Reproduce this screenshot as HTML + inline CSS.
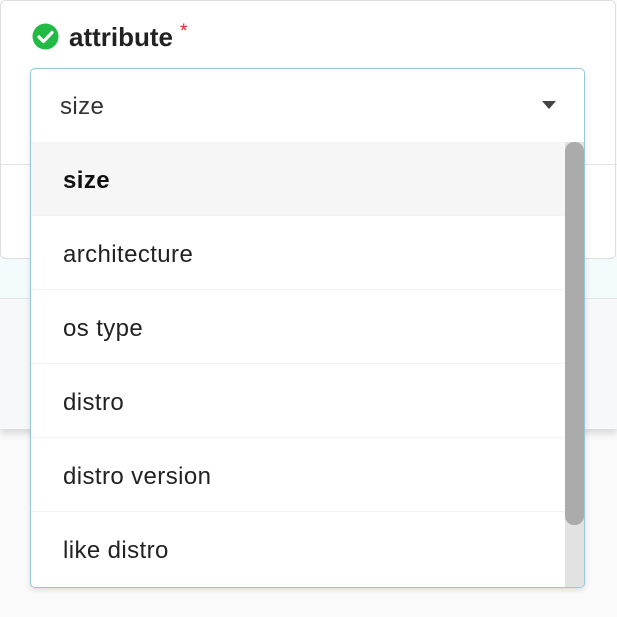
<!DOCTYPE html>
<html><head><style>
body{margin:0;width:617px;height:617px;overflow:hidden;background:#fafafa;font-family:"Liberation Sans",sans-serif;position:relative;color:#222}
.abs{position:absolute}
.it{height:73px;border-top:1px solid #f3f3f3;font-size:24px;letter-spacing:0.4px;line-height:78px;padding-left:32px}
</style></head><body>
<div class="abs" style="left:0;top:298px;width:617px;height:130px;background:#f6f8f9;border-top:1px solid #e2e5e7;box-shadow:0 4px 8px rgba(0,0,0,.15)"></div>
<div class="abs" style="left:0;top:258px;width:617px;height:40px;background:#f4fbfc"></div>
<div class="abs" style="left:0;top:0;width:614px;height:257px;background:#fff;border:1.5px solid #ddd;border-radius:6px"></div>
<div class="abs" style="left:0;top:164px;width:617px;height:1px;background:#e3e3e3"></div>
<svg class="abs" style="left:32px;top:23px" width="28" height="28" viewBox="0 0 28 28"><circle cx="13.5" cy="13.5" r="13" fill="#21ba45"/><path d="M7 14l4.5 4.5 8.5-9" stroke="#fff" stroke-width="3.2" fill="none" stroke-linecap="round" stroke-linejoin="round"/></svg>
<div class="abs" style="left:69px;top:22px;font-size:26px;font-weight:bold;color:#222">attribute</div>
<div class="abs" style="left:180px;top:21px;font-size:19px;color:#db2828">*</div>
<div class="abs" style="left:30px;top:68px;width:553px;height:518px;background:#fff;border:1.5px solid #96c8da;border-radius:5px;box-shadow:0 2px 6px rgba(0,0,0,.12);overflow:hidden">
 <div class="abs" style="left:29px;top:24px;font-size:24px;letter-spacing:0.4px;color:#333">size</div>
 <svg class="abs" style="left:511px;top:32px" width="14" height="9"><path d="M0 0h14L7 8z" fill="#444"/></svg>
 <div class="abs" style="left:0;top:73px;width:535px">
  <div class="it" style="border-top:0;background:#f6f6f6;font-weight:bold;color:#111">size</div>
  <div class="it">architecture</div>
  <div class="it">os type</div>
  <div class="it">distro</div>
  <div class="it">distro version</div>
  <div class="it">like distro</div>
 </div>
 <div class="abs" style="left:534px;top:73px;width:20px;height:450px;background:#e2e2e2"></div>
 <div class="abs" style="left:534px;top:73px;width:19px;height:383px;background:#ababab;border-radius:9px"></div>
</div>
</body></html>
